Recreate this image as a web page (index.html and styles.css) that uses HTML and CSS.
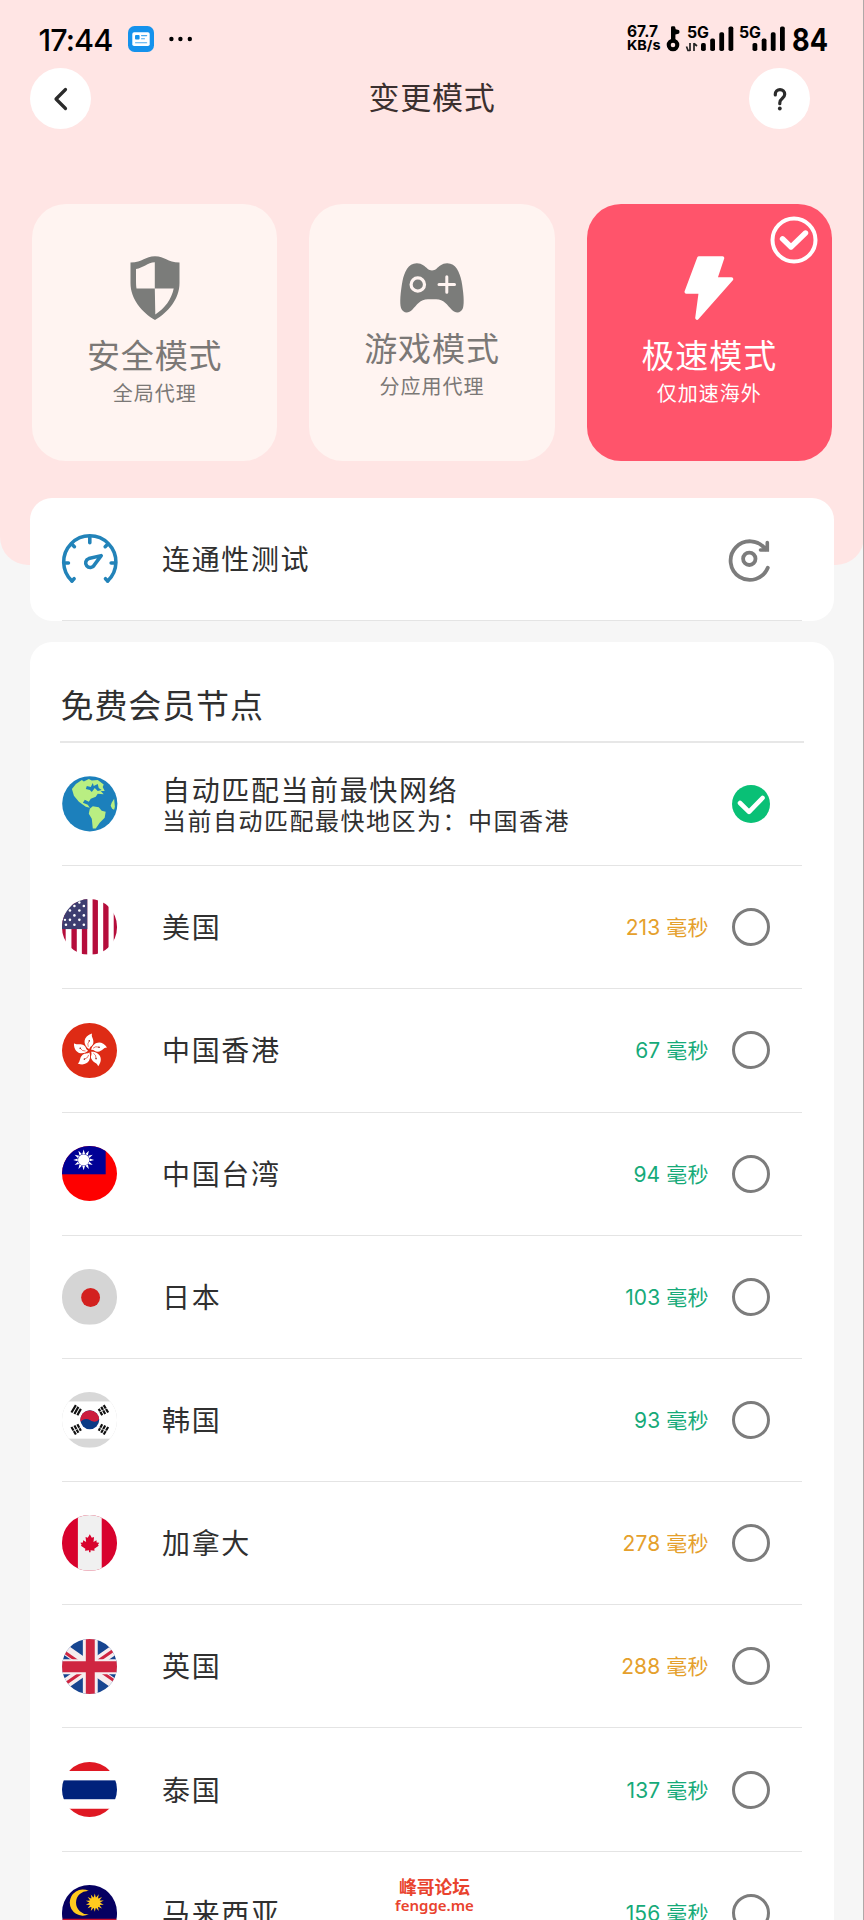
FILE: index.html
```html
<!DOCTYPE html>
<html lang="zh-CN">
<head>
<meta charset="utf-8">
<title>变更模式</title>
<link rel="stylesheet" href="styles.css">
</head>
<body>
<div class="screen">
  <header class="hero">
    <div class="statusbar">
      <div class="status-left">
        <span class="clock">17:44</span>
        <svg class="news" viewBox="0 0 26 26"><rect width="26" height="26" rx="6.5" fill="#1592ec"/><rect x="4.3" y="6.3" width="17.4" height="13.8" rx="1.8" fill="#fff"/><rect x="7" y="9" width="4.6" height="4.6" rx="1" fill="#1592ec"/><path d="M13.5 9.6h5.2M13.5 12.7h3M7.5 16.8h11.2" stroke="#4aabef" stroke-width="1.1" stroke-linecap="round"/></svg>
        <svg class="dots" viewBox="0 0 24 6"><circle cx="2.4" cy="3" r="2.2"/><circle cx="11.4" cy="3" r="2.2"/><circle cx="20.8" cy="3" r="2.2"/></svg>
      </div>
      <svg class="network" viewBox="627 20 204 36">
        <g class="net-text">
          <text x="627" y="36.500" font-size="15.5" textLength="31" lengthAdjust="spacingAndGlyphs">67.7</text>
          <text x="627" y="50" font-size="13.5" textLength="33.500" lengthAdjust="spacingAndGlyphs">KB/s</text>
          <text x="687" y="37.5" font-size="15.5" textLength="22" lengthAdjust="spacingAndGlyphs">5G</text>
          <text x="739" y="37.5" font-size="15.5" textLength="22" lengthAdjust="spacingAndGlyphs">5G</text>
          <text x="792" y="50.5" font-size="31" textLength="36" lengthAdjust="spacingAndGlyphs">84</text>
        </g>
        <circle cx="673" cy="45" r="4.300" fill="none" stroke="#000" stroke-width="4"/>
        <path d="M671 41V27.500q0-1.300 1.300-1.300h1.700q1 0 1.200 1l.5 2 2.900.7q.8.300.8 1v1.700q0 1-1 1.200l-3 .6V41z"/>
        <path d="M690 43v8M686.500 46.500l1.500 4 2 0M694 51v-8M694 43.500l3 2.500" fill="none" stroke="#222" stroke-width="1.700"/>
        <g>
          <rect x="701" y="43" width="4.800" height="8" rx="1.800"/><rect x="710.200" y="38.500" width="4.800" height="12.500" rx="1.800"/><rect x="719.300" y="32.300" width="4.800" height="18.700" rx="1.800"/><rect x="728.500" y="26.500" width="4.800" height="24.500" rx="1.800"/>
          <rect x="752.500" y="43" width="4.800" height="8" rx="1.800"/><rect x="761.700" y="38.500" width="4.800" height="12.500" rx="1.800"/><rect x="770.800" y="32.300" width="4.800" height="18.700" rx="1.800"/><rect x="780" y="26.500" width="4.800" height="24.500" rx="1.800"/>
        </g>
      </svg>
    </div>
    <nav class="navbar">
      <button class="round" aria-label="返回"><svg viewBox="0 0 61 61"><path d="M35.500 21.500 26 31l9.500 9.500" fill="none" stroke="#2b2b2b" stroke-width="3.200" stroke-linecap="round" stroke-linejoin="round"/></svg></button>
      <h1 class="title">变更模式</h1>
      <button class="round" aria-label="帮助"><svg viewBox="0 0 61 61"><path d="M26.300 27v-.7a4.700 4.700 0 0 1 9.400 0c0 2.200-1.300 3.200-2.700 4.400-1.500 1.200-2.200 2.200-2.200 4v1" fill="none" stroke="#2b2b2b" stroke-width="3.200" stroke-linecap="round"/><circle cx="30.800" cy="40.500" r="1.900" fill="#2b2b2b"/></svg></button>
    </nav>
    <div class="modes">
      <section class="mode">
        <svg class="shield" viewBox="0 0 50 64"><path fill="#7b7c7a" d="M.5 6.500C13 6.500 15 .3 25 .3S37 6.500 49.500 6.500V27C49.500 43 38 56.500 25 64 12 56.500.5 43 .5 27z"/><path fill="#fff4f1" d="M24.800 6.300V32.500H6.500C6 30 6 26 6 22V13C13 12 17.500 6.700 24.800 6.300zM24.800 32.500H43.700C41.500 43.500 34.500 52.500 25.300 58.500z"/></svg>
        <h2 class="mode-name">安全模式</h2><p class="mode-note">全局代理</p>
      </section>
      <section class="mode">
        <svg class="pad" viewBox="0 0 64 50"><path fill="#7b7c7a" d="M16.700.3C22 .2 25 3.500 27.500 5.800 30 8 34 8 36.500 5.800 39 3.500 42 .2 47.300.3 56 .5 59.500 9 61.500 18 63.500 29 64.500 40 63 45 61 50.500 55.500 50.500 52 47 47 42 44 36.300 36 36.300H28C20 36.300 17 42 12 47 8.500 50.500 3 50.500 1 45-.5 40 .5 29 2.500 18 4.500 9 8 .5 16.700.3z"/><circle cx="17.800" cy="21.500" r="6.700" fill="none" stroke="#fff4f1" stroke-width="3.200"/><path d="M39 21.500h15.500M46.800 13.800v15.500" stroke="#fff4f1" stroke-width="3" stroke-linecap="round"/></svg>
        <h2 class="mode-name">游戏模式</h2><p class="mode-note">分应用代理</p>
      </section>
      <section class="mode mode-on">
        <svg class="badge" viewBox="0 0 48 48"><circle cx="24" cy="24" r="21.500" fill="none" stroke="#fff" stroke-width="4"/><path d="M12.500 22.800 21 31l14.500-14" fill="none" stroke="#fff" stroke-width="5.400" stroke-linecap="round" stroke-linejoin="round"/></svg>
        <svg class="bolt" viewBox="0 0 50 64"><path d="M15 2H38.500L31.500 23H47.500L13 62 16.500 36H2.300z" fill="#fff" stroke="#fff" stroke-width="3.600" stroke-linejoin="round"/></svg>
        <h2 class="mode-name">极速模式</h2><p class="mode-note">仅加速海外</p>
      </section>
    </div>
  </header>

  <main class="content">
    <section class="card">
      <div class="row row-test">
        <svg class="icon" viewBox="0 -1.800 56 56"><g fill="none" stroke="#2283b9" stroke-width="3.600" stroke-linecap="round" stroke-linejoin="round"><path d="M10 48.500A26.300 26.300 0 1 1 46 48.500"/><path d="M10 48.500l2.200-2.200M46 48.500l-2.200-2.200M28 4.500v5.500M11 12.500l1.500 1.500M45 12.500l-1.500 1.500M3.500 30.500h3M52.500 30.500h-3"/><path d="M39.500 23 27 26A4.600 4.600 0 1 0 32.500 32.500z"/></g></svg>
        <span class="name">连通性测试</span>
        <svg class="refresh" viewBox="0 0 44 44"><g fill="none" stroke="#7c7c7c" stroke-width="3.800" stroke-linecap="round" stroke-linejoin="round"><path d="M40.800 30.800A19.300 19.300 0 1 1 38.500 12.200"/><circle cx="22.300" cy="21.800" r="6.200"/></g><path d="M40.300 5.500V13H33.500" fill="none" stroke="#7c7c7c" stroke-width="3.600" stroke-linecap="round"/><path d="M41 6v8H34z" fill="#7c7c7c"/></svg>
      </div>
    </section>

    <section class="card card-nodes">
      <h2 class="section-title">免费会员节点</h2>
      <div class="row">
        <svg class="icon" viewBox="0 0 56 56"><circle cx="28" cy="28" r="27.800" fill="#1c80bc"/><path fill="#b9ee82" d="M10 13 14 8 20 4 22 5.500 27 3 30 4.500 36 4 42 8.500 41 11 43 15 39 15 42 18.500 36 18 34 21 29 23 27 26 23 24 21 27 26 29 28 32 24 31 17 26 12 20z"/><path fill="#1c80bc" d="m31 7 1 3 4-2 1 4 3 2-4 1-3-3-3 4-2-2-4-1 1-3 4 1z"/><path fill="#b9ee82" d="m28 33 3-2.500 6 1 3 3.500 4 1-1 6-5 5-4 6h-3l-1-10-3-5zM50 27l2.500-4 .8 8-.8 3-2-1-1.500-3z"/></svg>
        <div class="name-stack"><span class="name">自动匹配当前最快网络</span><span class="sub">当前自动匹配最快地区为：中国香港</span></div>
        <svg class="radio" viewBox="0 0 38 38"><circle cx="19" cy="19" r="19" fill="#09c076"/><path d="M8 18l9 8.800L30.500 13" fill="none" stroke="#fff" stroke-width="4.600" stroke-linecap="round" stroke-linejoin="round"/></svg>
      </div>
      <div class="row">
        <svg class="icon flag" viewBox="0 0 56 56"><rect width="56" height="56" fill="#fff"/><path d="M1 0v56M12.200 0v56M22.700 0v56M33.500 0v56M44.200 0v56M54.800 0v56" stroke="#b50d3b" stroke-width="5.400"/><rect width="25.500" height="30.300" fill="#3d3e70"/><g fill="#fff"><circle cx="17.500" cy="3.500" r="1.200"/><circle cx="12.500" cy="7" r="1.300"/><circle cx="22" cy="7" r="1.300"/><circle cx="17.500" cy="11.500" r="1.300"/><circle cx="8" cy="11.500" r="1.300"/><circle cx="12.500" cy="16.500" r="1.300"/><circle cx="22" cy="16.500" r="1.300"/><circle cx="17.500" cy="21" r="1.300"/><circle cx="8" cy="21" r="1.300"/><circle cx="3" cy="21" r="1.200"/><circle cx="12.500" cy="26" r="1.300"/><circle cx="22" cy="26" r="1.300"/><circle cx="4" cy="26" r="1.300"/></g></svg>
        <span class="name">美国</span><span class="ping slow">213 毫秒</span><i class="radio ring"></i>
      </div>
      <div class="row">
        <svg class="icon flag" viewBox="0 0 56 56"><defs><g id="petal"><path d="M27.500 26.500C20.500 22 21 13 30.300 10.500 29 14 32.500 16 31.500 20.500 30.800 23.500 28 23.500 27.500 26.500z" fill="#fff"/><path d="M26.500 24q-1.500-3 1-6" fill="none" stroke="#de2b15" stroke-width=".6"/><circle cx="27.500" cy="18" r=".8" fill="#a02b25"/></g></defs><rect width="56" height="56" fill="#de2b15"/><use href="#petal"/><use href="#petal" transform="rotate(72 28 28)"/><use href="#petal" transform="rotate(144 28 28)"/><use href="#petal" transform="rotate(216 28 28)"/><use href="#petal" transform="rotate(288 28 28)"/></svg>
        <span class="name">中国香港</span><span class="ping">67 毫秒</span><i class="radio ring"></i>
      </div>
      <div class="row">
        <svg class="icon flag" viewBox="0 0 56 56"><rect width="56" height="56" fill="#fe0000"/><rect width="44" height="28.500" fill="#000095"/><path d="M21.800 3.500 23.200 8H20.400zM21.800 24.500 23.200 20H20.400z" fill="#fff" id="ray"/><use href="#ray" transform="rotate(30 21.800 14)"/><use href="#ray" transform="rotate(60 21.800 14)"/><use href="#ray" transform="rotate(90 21.800 14)"/><use href="#ray" transform="rotate(120 21.800 14)"/><use href="#ray" transform="rotate(150 21.800 14)"/><circle cx="21.800" cy="14" r="5.700" fill="#fff"/></svg>
        <span class="name">中国台湾</span><span class="ping">94 毫秒</span><i class="radio ring"></i>
      </div>
      <div class="row">
        <svg class="icon flag" viewBox="0 0 56 56"><rect width="56" height="56" fill="#d5d5d5"/><circle cx="28.800" cy="28.700" r="9.500" fill="#d3211f"/></svg>
        <span class="name">日本</span><span class="ping">103 毫秒</span><i class="radio ring"></i>
      </div>
      <div class="row">
        <svg class="icon flag" viewBox="0 0 56 56"><rect width="56" height="56" fill="#d8d8d8"/><rect y="9.500" width="56" height="37.500" fill="#fff"/><circle cx="28" cy="28" r="9.500" fill="#0b3a85"/><path d="M18.800 25.500A9.500 9.500 0 0 1 37.400 27C36 30 32 31 28.500 28.500 25 26 21 27 18.800 30 18.300 28.500 18.500 27 18.800 25.500z" fill="#cc1c3e"/><g stroke="#111" stroke-width="2.200"><path id="bars" d="M9.500 20.700 14 13.200M12.500 22.200 16.500 15M15.500 23.500 19 17"/><use href="#bars" transform="matrix(-1 0 0 1 56 0)"/><use href="#bars" transform="matrix(1 0 0 -1 0 56)"/><use href="#bars" transform="rotate(180 28 28)"/></g><path d="M46 16l-9 4.500M10 40l9-4.500M46 40l-9-4.500" stroke="#fff" stroke-width=".7"/></svg>
        <span class="name">韩国</span><span class="ping">93 毫秒</span><i class="radio ring"></i>
      </div>
      <div class="row">
        <svg class="icon flag" viewBox="0 0 56 56"><rect width="56" height="56" fill="#d8022d"/><rect x="16" width="24" height="56" fill="#f0f0f0"/><path fill="#d8022d" d="m28 19.500 2 3.500 2.300-.8-.6 5 3-1.700.2 2.200 2.600.2-1.300 2 .8 1.200-4.500 3 .3 1.800-4-.5V37.500h-1.600V35.400l-4 .5.300-1.800-4.500-3 .8-1.200-1.300-2 2.600-.2.200-2.200 3 1.700-.6-5 2.300.8z"/></svg>
        <span class="name">加拿大</span><span class="ping slow">278 毫秒</span><i class="radio ring"></i>
      </div>
      <div class="row">
        <svg class="icon flag" viewBox="0 0 56 56"><rect width="56" height="56" fill="#174590"/><path d="M-5 5 61 51M-5 51 61 5" stroke="#f6edef" stroke-width="10"/><path d="M-5 8 28 31M28 28 61 5M-5 51 28 28M28 25 61 48" stroke="#cf2541" stroke-width="3"/><path d="M28.500 0v56M0 28h56" stroke="#f6edef" stroke-width="15"/><path d="M28.500 0v56" stroke="#cf2541" stroke-width="9"/><path d="M0 28h56" stroke="#cf2541" stroke-width="11"/></svg>
        <span class="name">英国</span><span class="ping slow">288 毫秒</span><i class="radio ring"></i>
      </div>
      <div class="row">
        <svg class="icon flag" viewBox="0 0 56 56"><rect width="56" height="56" fill="#fff"/><path fill="#df1823" d="M0 0h56v9H0zM0 47.200h56V56H0z"/><rect y="18.500" width="56" height="19" fill="#00227b"/></svg>
        <span class="name">泰国</span><span class="ping">137 毫秒</span><i class="radio ring"></i>
      </div>
      <div class="row">
        <svg class="icon flag" viewBox="0 0 56 56"><rect width="56" height="56" fill="#060061"/><path d="M0 35.500h56" stroke="#c8102e" stroke-width="3"/><path d="M27 6A13.200 13.200 0 1 0 27 29.500 11.800 11.800 0 1 1 27 6z" fill="#ffc91f"/><path id="sunray" d="M33 8.500 34.500 14h-3zM33 27 34.500 21.500h-3z" fill="#ffc91f"/><use href="#sunray" transform="rotate(25.700 33 17.800)"/><use href="#sunray" transform="rotate(51.400 33 17.800)"/><use href="#sunray" transform="rotate(77.100 33 17.800)"/><use href="#sunray" transform="rotate(102.900 33 17.800)"/><use href="#sunray" transform="rotate(128.600 33 17.800)"/><use href="#sunray" transform="rotate(154.300 33 17.800)"/><circle cx="33" cy="17.800" r="5.500" fill="#ffc91f"/></svg>
        <span class="name">马来西亚</span><span class="ping">156 毫秒</span><i class="radio ring"></i>
      </div>
    </section>
  </main>
  <div class="watermark"><span>峰哥论坛</span><span class="site">fengge.me</span></div>
</div>
</body>
</html>
```

FILE: styles.css
```css
* { box-sizing: border-box; margin: 0; padding: 0; }
html, body { height: 1920px; overflow: hidden; }
body { font-family: Inter, "Noto Sans CJK SC", sans-serif; color: #303030; }
svg { display: block; flex: none; overflow: visible; }

.screen {
  position: relative;
  height: 1920px;
  overflow: hidden;
  background: #f6f6f6;
}
.screen::after {
  content: "";
  position: absolute;
  inset: 0 0 0 auto;
  width: 1px;
  background: #b0a8a8;
}

.hero { height: 565px; background: #ffe5e4; border-radius: 0 0 28px 28px; }

.statusbar {
  display: flex;
  justify-content: space-between;
  height: 68px;
  padding: 20px 33px 0 38.500px;
}
.status-left { display: flex; align-items: center; height: 38px; }
.clock { width: 89.500px; font-size: 30.500px; font-weight: 500; letter-spacing: -0.9px; color: #000; white-space: nowrap; }
.news { width: 26px; height: 26px; }
.dots { width: 24px; height: 6px; margin-left: 14.500px; }
.network { width: 204px; height: 36px; }
.net-text { font-family: Inter, sans-serif; font-weight: 700; }

.navbar { display: flex; justify-content: space-between; align-items: center; padding: 0 54px 0 30px; height: 61px; }
.round { width: 61px; height: 61px; border: 0; border-radius: 50%; background: #fff; }
.round svg { width: 61px; height: 61px; }
.title { margin-top: -2px; font-size: 31px; font-weight: 400; letter-spacing: 0.800px; line-height: 44px; padding-left: 24px; color: #3b302f; }

.modes { display: grid; grid-template-columns: repeat(3, 1fr); gap: 31.800px; margin: 75px 32px 0; }
.mode {
  position: relative;
  display: flex;
  flex-direction: column;
  align-items: center;
  justify-content: center;
  height: 257px;
  border-radius: 34px;
  background: #fff4f1;
  color: #7b7876;
}
.mode-on { background: #ff546b; color: #fff; }
.shield, .bolt { width: 50px; height: 64px; }
.pad { width: 64px; height: 50px; }
.mode-name { margin-top: 12px; font-size: 33px; font-weight: 400; line-height: 48px; letter-spacing: 0.900px; }
.mode-note { margin-top: -1px; font-size: 20px; line-height: 30px; letter-spacing: 1px; }
.badge { position: absolute; top: 12px; right: 14px; width: 48px; height: 48px; }

.content { margin: -67.500px 30px 0; }
.card { padding: 0 32px 0 31.500px; border-radius: 22px; background: #fff; }
.card-nodes { margin-top: 21px; }
.section-title {
  height: 101.300px;
  margin: 0 -2px;
  padding: 41px 0 0 1px;
  border-bottom: 2px solid #e7e7e7;
  font-size: 33px;
  font-weight: 400;
  line-height: 46px;
  letter-spacing: 0.900px;
}
.row { display: flex; align-items: center; height: 123.200px; border-bottom: 1.500px solid #e4e4e4; padding-right: 32px; }
.icon { width: 55.600px; height: 55.600px; margin-right: 45px; }
.flag { border-radius: 50%; overflow: hidden; }
.name { flex: 1; padding-top: 2px; font-size: 28px; line-height: 34px; letter-spacing: 1.600px; }
.name-stack { flex: 1; display: flex; flex-direction: column; white-space: nowrap; }
.name-stack .name { line-height: 33px; }
.sub { margin-top: -1px; font-size: 24px; line-height: 29px; letter-spacing: 1.500px; }
.ping { margin: -2px 23.500px 0 0; font-size: 21px; letter-spacing: 0.100px; color: #16aa79; white-space: nowrap; }
.slow { color: #e5a02c; }
.radio { flex: none; width: 38px; height: 38px; }
.ring { border: 3px solid #7c7c7c; border-radius: 50%; }
.refresh { width: 44px; height: 44px; margin-right: -1px; }

.watermark {
  position: absolute;
  left: 0;
  right: 0;
  top: 1878px;
  padding-left: 5px;
  display: flex;
  flex-direction: column;
  align-items: center;
  font-size: 17.800px;
  font-weight: 700;
  line-height: 19px;
  color: #e9432e;
}
.site { font-family: "Noto Sans", sans-serif; font-size: 15px; font-weight: 600; line-height: 16px; }
```
